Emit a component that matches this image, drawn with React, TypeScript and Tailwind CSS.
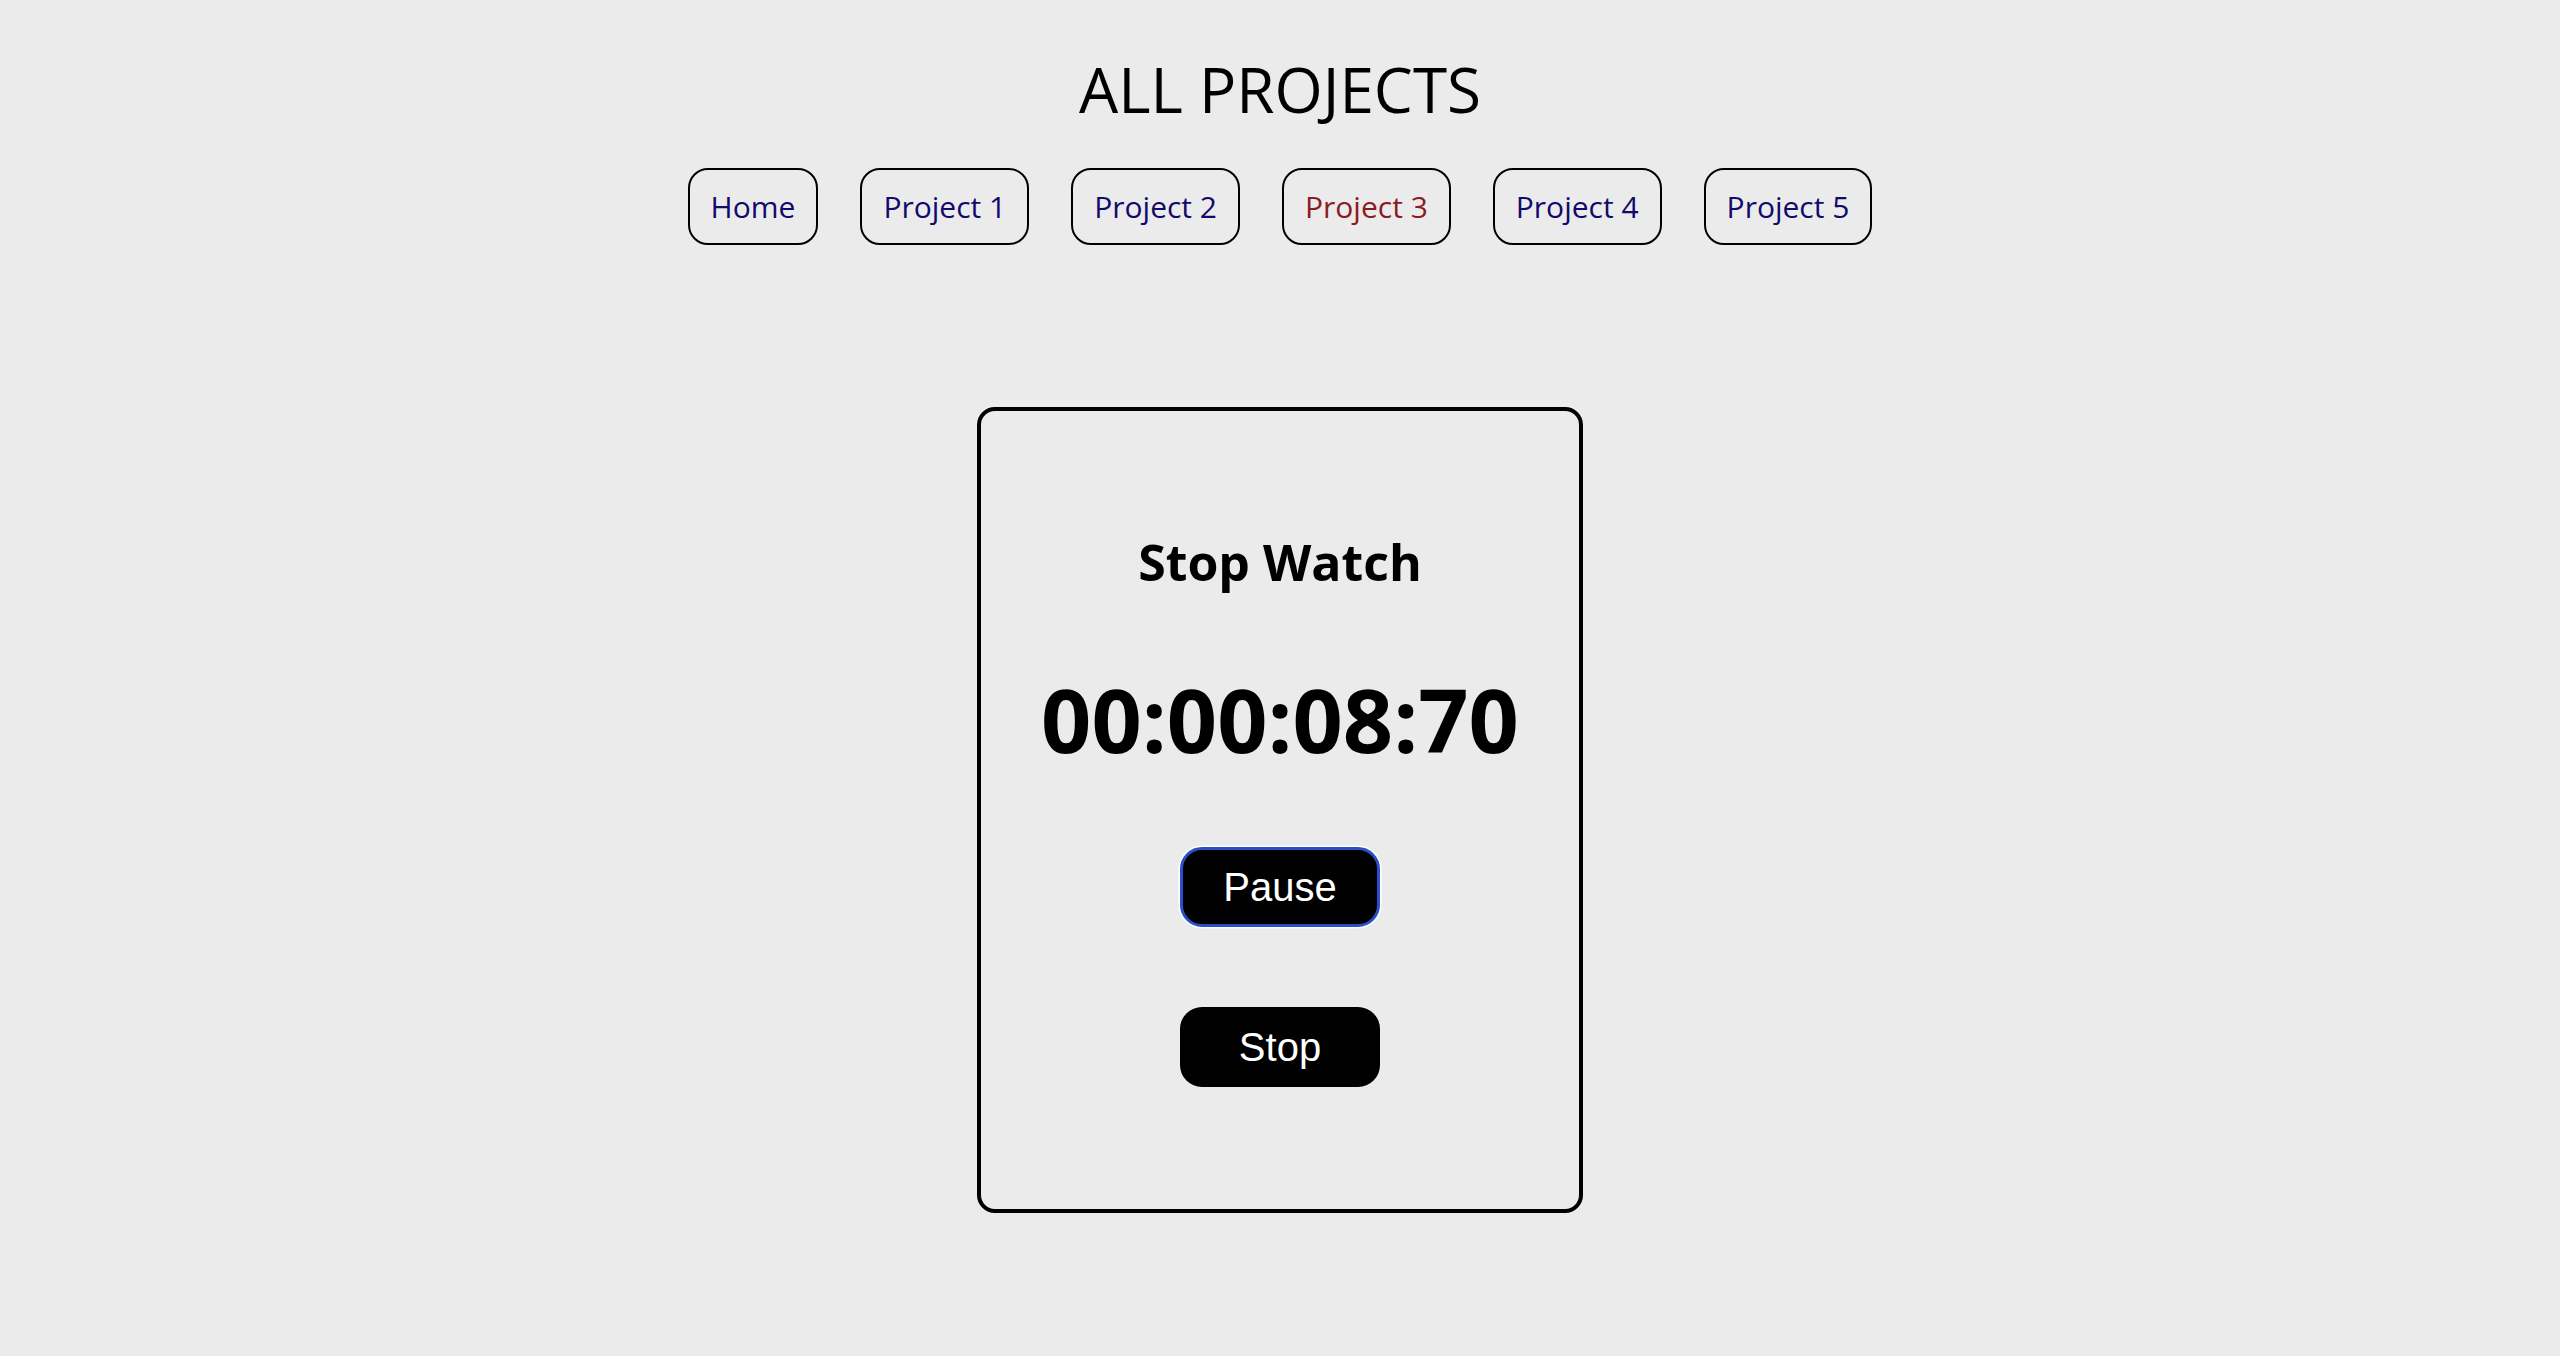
import React from "react";

const links = ["Home", "Project 1", "Project 2", "Project 3", "Project 4", "Project 5"];

export default function App() {
  return (
    <main className="min-h-screen w-full bg-[#ebebeb] flex flex-col items-center pt-[47px]">
      <h1 className="text-[62px] leading-[84px] font-normal text-black font-['Open_Sans',sans-serif]">
        ALL PROJECTS
      </h1>
      <nav className="mt-[37px] flex gap-[42px]">
        {links.map((name) => (
          <a
            key={name}
            href="#"
            className={`h-[77px] px-[21px] flex items-center border-2 border-black rounded-[20px] text-[30px] font-medium font-['Open_Sans',sans-serif] ${
              name === "Project 3" ? "text-[#8b1a22]" : "text-[#110a6c]"
            }`}
          >
            {name}
          </a>
        ))}
      </nav>

      <section className="mt-[162px] w-[606px] h-[806px] border-[4px] border-black rounded-[18px] flex flex-col items-center pt-[116px]">
        <h2 className="text-[50px] font-bold leading-[70px] text-black font-['Open_Sans',sans-serif]">
          Stop Watch
        </h2>
        <div className="mt-[62px] text-[88px] font-bold leading-[120px] text-black font-['Open_Sans',sans-serif]">
          00:00:08:70
        </div>
        <button className="mt-[68px] w-[200px] h-[80px] rounded-[22px] bg-black text-white border-[3px] border-[#2a50c8] shadow-[0_0_0_1.5px_#ffffff] text-[40px] font-['Liberation_Sans',Arial,sans-serif]">
          Pause
        </button>
        <button className="mt-[80px] w-[200px] h-[80px] rounded-[22px] bg-black text-white text-[40px] font-['Liberation_Sans',Arial,sans-serif]">
          Stop
        </button>
      </section>
    </main>
  );
}
